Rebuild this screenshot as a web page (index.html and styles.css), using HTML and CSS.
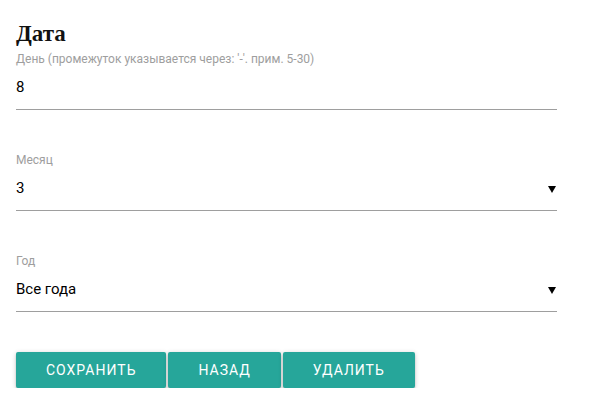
FILE: index.html
```html
<!DOCTYPE html>
<html>
<head>
<meta charset="utf-8">
<link rel="stylesheet" href="styles.css">
</head>
<body>
<div class="page">
  <h2 class="title">Дата</h2>
  <div class="field">
    <label class="label">День (промежуток указывается через: '-'. прим. 5-30)</label>
    <div class="input">8</div>
  </div>
  <div class="field">
    <label class="label">Месяц</label>
    <div class="input select"><span>3</span><svg class="caret" width="8" height="7" viewBox="0 0 8 7"><path d="M0 0H8L4 7Z" fill="#000"/></svg></div>
  </div>
  <div class="field">
    <label class="label">Год</label>
    <div class="input select"><span>Все года</span><svg class="caret" width="8" height="7" viewBox="0 0 8 7"><path d="M0 0H8L4 7Z" fill="#000"/></svg></div>
  </div>
  <div class="actions">
    <button class="btn btn-save">Сохранить</button>
    <button class="btn btn-back">Назад</button>
    <button class="btn btn-del">Удалить</button>
  </div>
</div>
</body>
</html>
```
FILE: styles.css
```css
html, body {
  margin: 0;
  padding: 0;
  background: #fff;
}
.page {
  padding: 16px 32px 0 16px;
  font-family: Roboto, "Liberation Sans", sans-serif;
}
.title {
  font-family: "Liberation Serif", serif;
  font-weight: bold;
  font-size: 23px;
  line-height: 28px;
  margin: 4px 0 3px 0;
  color: #111;
}
.field {
  display: flex;
  flex-direction: column;
}
.label {
  font-size: 12px;
  line-height: 16px;
  color: #9e9e9e;
}
.input {
  font-size: 15px;
  line-height: 20px;
  color: #000;
  padding: 10px 0 12px 0;
  border-bottom: 1px solid #9e9e9e;
}
.field + .field {
  margin-top: 42px;
}
.select {
  display: flex;
  justify-content: space-between;
  align-items: center;
}
.caret {
  display: block;
  margin-right: 1px;
  margin-top: 3px;
}
.actions {
  display: flex;
  gap: 2px;
  margin-top: 40px;
}
.btn {
  height: 36px;
  border: none;
  border-radius: 2px;
  background: #26a69a;
  color: #fff;
  font-family: Roboto, "Liberation Sans", sans-serif;
  font-size: 14px;
  letter-spacing: 1px;
  text-transform: uppercase;
  padding: 0 30px;
  box-shadow: 0 2px 2px 0 rgba(0,0,0,0.14), 0 3px 1px -2px rgba(0,0,0,0.12), 0 1px 5px 0 rgba(0,0,0,0.2);
}
```
